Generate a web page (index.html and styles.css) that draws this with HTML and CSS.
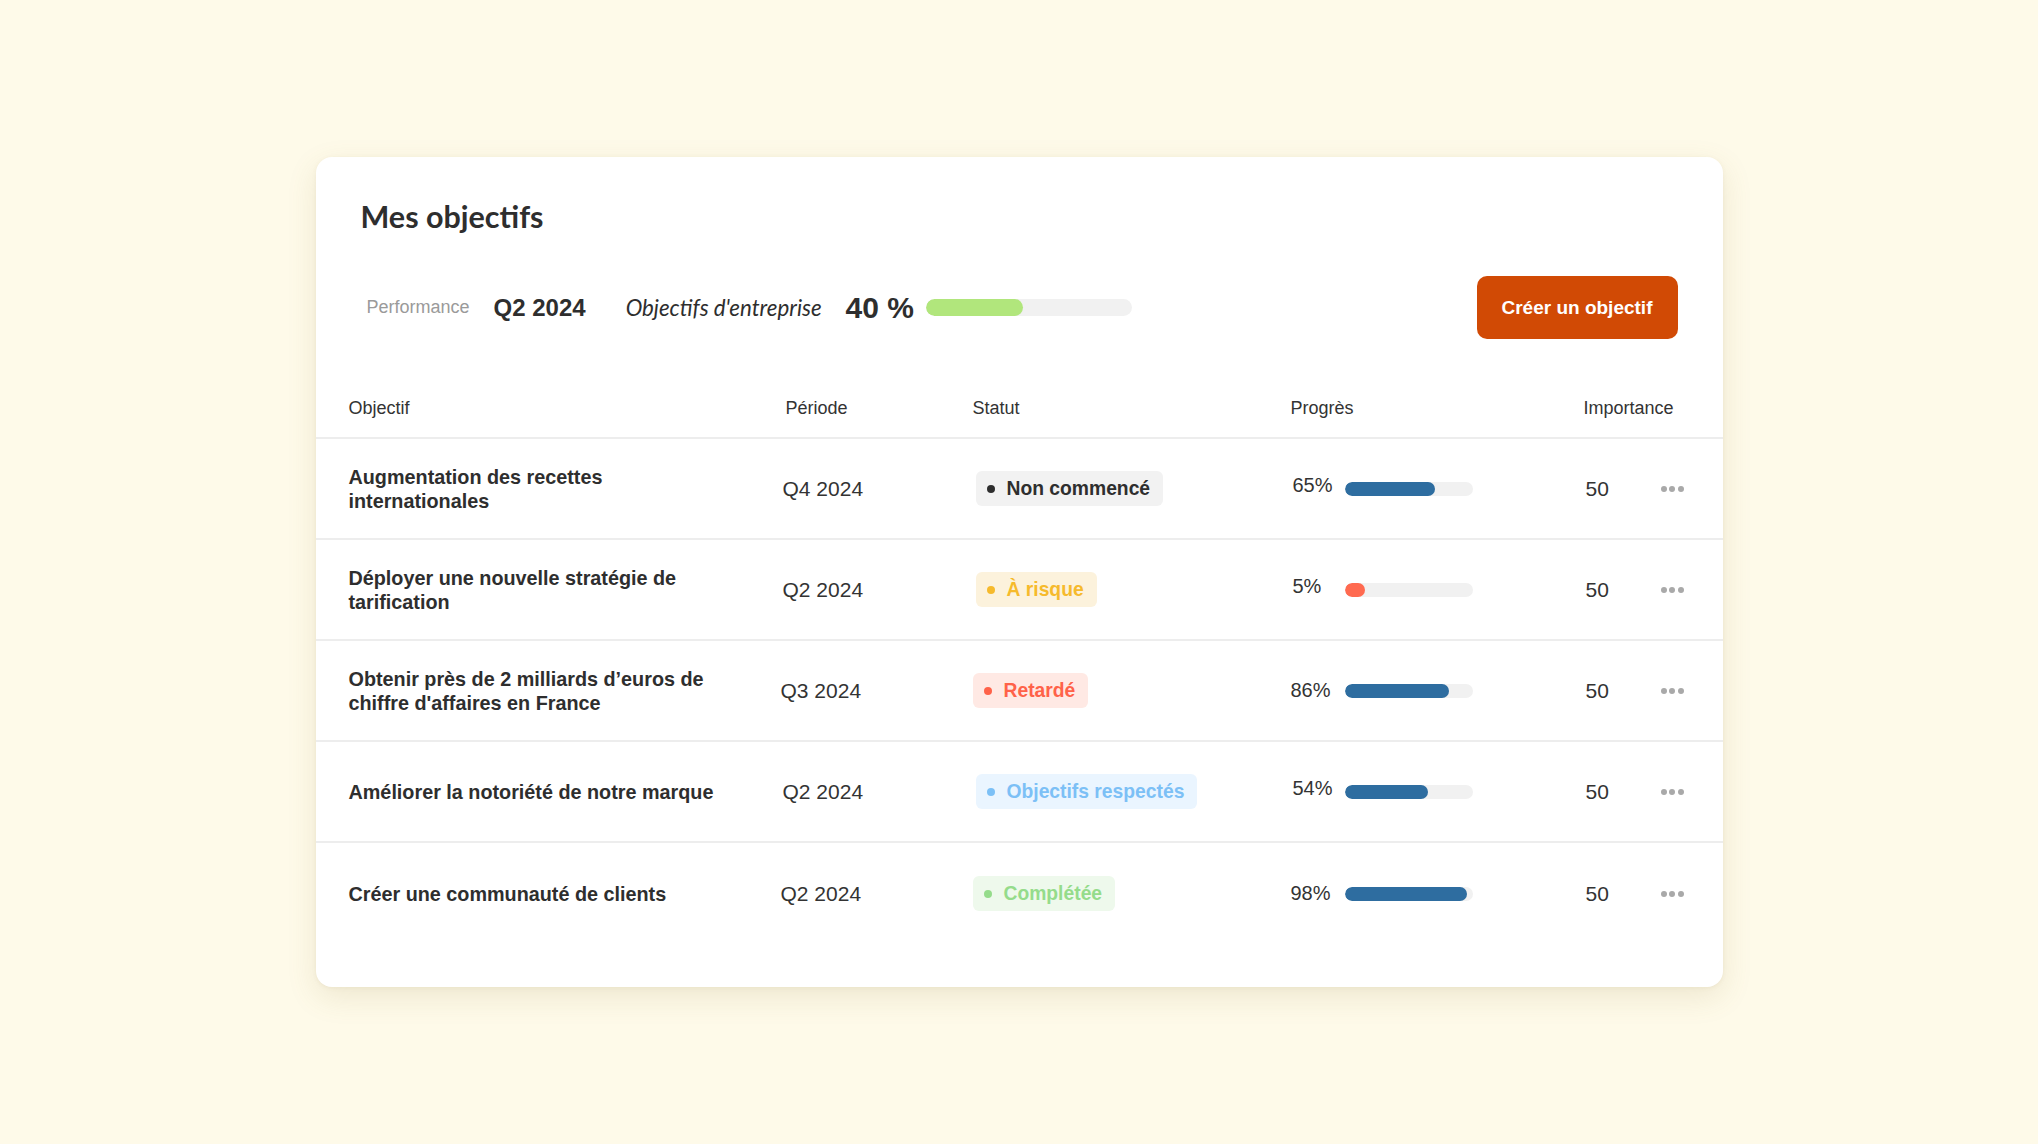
FILE: index.html
```html
<!DOCTYPE html>
<html lang="fr">
<head>
<meta charset="utf-8">
<title>Mes objectifs</title>
<link rel="stylesheet" href="styles.css">
</head>
<body>
<div class="page">
  <div class="card">
    <h1 class="title">Mes objectifs</h1>
    <div class="summary">
      <div class="summary-left">
        <span class="perf-label">Performance</span>
        <span class="perf-quarter">Q2 2024</span>
        <span class="perf-company">Objectifs d'entreprise</span>
        <span class="perf-value">40 %</span>
        <div class="track track-big"><div class="fill fill-green" style="width:47%"></div></div>
      </div>
      <button class="btn">Créer un objectif</button>
    </div>

    <div class="table">
      <div class="grid thead">
        <div class="th">Objectif</div>
        <div class="th">Période</div>
        <div class="th">Statut</div>
        <div class="th">Progrès</div>
        <div class="th">Importance</div>
        <div></div>
      </div>

      <div class="grid trow">
        <div class="obj">Augmentation des recettes internationales</div>
        <div class="period">Q4 2024</div>
        <div class="status"><span class="badge badge-grey"><i class="dot"></i>Non commencé</span></div>
        <div class="progress"><span class="pct pct-up">65%</span><div class="track"><div class="fill fill-blue" style="width:90px"></div></div></div>
        <div class="imp">50</div>
        <div class="more"><i></i><i></i><i></i></div>
      </div>

      <div class="grid trow">
        <div class="obj">Déployer une nouvelle stratégie de tarification</div>
        <div class="period">Q2 2024</div>
        <div class="status"><span class="badge badge-yellow"><i class="dot"></i>À risque</span></div>
        <div class="progress"><span class="pct pct-up">5%</span><div class="track"><div class="fill fill-red" style="width:20px"></div></div></div>
        <div class="imp">50</div>
        <div class="more"><i></i><i></i><i></i></div>
      </div>

      <div class="grid trow">
        <div class="obj">Obtenir près de 2 milliards d’euros de chiffre d'affaires en France</div>
        <div class="period period-left">Q3 2024</div>
        <div class="status status-left"><span class="badge badge-red"><i class="dot"></i>Retardé</span></div>
        <div class="progress"><span class="pct">86%</span><div class="track"><div class="fill fill-blue" style="width:104px"></div></div></div>
        <div class="imp">50</div>
        <div class="more"><i></i><i></i><i></i></div>
      </div>

      <div class="grid trow">
        <div class="obj">Améliorer la notoriété de notre marque</div>
        <div class="period">Q2 2024</div>
        <div class="status"><span class="badge badge-blue"><i class="dot"></i>Objectifs respectés</span></div>
        <div class="progress"><span class="pct pct-up">54%</span><div class="track"><div class="fill fill-blue" style="width:83px"></div></div></div>
        <div class="imp">50</div>
        <div class="more"><i></i><i></i><i></i></div>
      </div>

      <div class="grid trow last">
        <div class="obj">Créer une communauté de clients</div>
        <div class="period period-left">Q2 2024</div>
        <div class="status status-left"><span class="badge badge-green"><i class="dot"></i>Complétée</span></div>
        <div class="progress"><span class="pct">98%</span><div class="track"><div class="fill fill-blue" style="width:122px"></div></div></div>
        <div class="imp">50</div>
        <div class="more"><i></i><i></i><i></i></div>
      </div>
    </div>
  </div>
</div>
</body>
</html>
```

FILE: styles.css
```css
* { box-sizing: border-box; }

html, body {
  margin: 0;
  padding: 0;
}

body {
  background: #fefae9;
  font-family: "Liberation Sans", Arial, sans-serif;
  color: #2e2e2e;
}

.page {
  min-height: 100vh;
  display: flex;
  align-items: center;
  justify-content: center;
}

.card {
  width: 1407px;
  height: 830px;
  background: #ffffff;
  border-radius: 16px;
  box-shadow: 0 10px 30px rgba(140, 120, 60, 0.14), 0 1px 4px rgba(140, 120, 60, 0.08);
}

.title {
  margin: 0;
  padding: 42px 0 0 45px;
  font-family: Lato, "Liberation Sans", sans-serif;
  font-weight: 700;
  font-size: 30.5px;
  line-height: 35px;
  color: #2e2e2e;
}

.summary {
  margin-top: 42px;
  height: 63px;
  padding: 0 45px 0 51px;
  display: flex;
  align-items: center;
  justify-content: space-between;
}

.summary-left {
  display: flex;
  align-items: center;
}

.perf-label {
  font-size: 18px;
  color: #9a9a9a;
  margin-right: 24px;
}

.perf-quarter {
  font-size: 24px;
  font-weight: 700;
  color: #2e2e2e;
  margin-right: 40px;
}

.perf-company {
  font-family: Lato, "Liberation Sans", sans-serif;
  font-style: italic;
  font-size: 22.3px;
  color: #2e2e2e;
  margin-right: 24px;
}

.perf-value {
  font-size: 30px;
  font-weight: 700;
  color: #2e2e2e;
  margin-right: 12px;
}

.track {
  width: 128px;
  height: 14px;
  border-radius: 7px;
  background: #f1f1f1;
  overflow: hidden;
}

.track-big {
  width: 206px;
  height: 17px;
  border-radius: 9px;
}

.fill {
  height: 100%;
  border-radius: 9px;
}

.fill-green { background: #b1e67c; }
.fill-blue { background: #2e6da0; }
.fill-red { background: #ff6a50; }

.btn {
  height: 63px;
  width: 201px;
  border: 0;
  border-radius: 10px;
  background: #d14a05;
  color: #ffffff;
  font-family: "Liberation Sans", Arial, sans-serif;
  font-weight: 700;
  font-size: 19px;
  cursor: pointer;
}

.table {
  margin-top: 40px;
}

.grid {
  display: grid;
  grid-template-columns: 437px 187px 318px 293px 77px 23px;
  align-items: center;
  padding-left: 33px;
}

.thead {
  height: 60px;
  border-bottom: 2px solid #ededed;
}

.th {
  font-size: 18px;
  color: #333333;
}

.trow {
  height: 101px;
  border-bottom: 2px solid #ededed;
}

.trow.last {
  border-bottom: 0;
}

.obj {
  max-width: 385px;
  font-size: 19.8px;
  line-height: 24px;
  font-weight: 700;
  color: #2e2e2e;
}

.period {
  font-size: 21px;
  color: #333333;
  margin-left: -3px;
}

.period-left {
  margin-left: -5px;
}

.status {
  padding-left: 3px;
}

.status-left {
  padding-left: 0;
}

.badge {
  display: inline-flex;
  align-items: center;
  height: 35px;
  padding: 0 13px 0 11px;
  border-radius: 6px;
  font-size: 19.3px;
  font-weight: 700;
}

.badge .dot {
  display: inline-block;
  width: 8px;
  height: 8px;
  border-radius: 50%;
  margin-right: 12px;
  background: currentColor;
}

.badge-grey { background: #f2f2f2; color: #2e2e2e; }
.badge-yellow { background: #fcf2dc; color: #f6ba2c; }
.badge-red { background: #ffe9e4; color: #ff6249; }
.badge-blue { background: #eaf5ff; color: #7cc0f6; }
.badge-green { background: #eef9ec; color: #95dc8b; }

.progress {
  display: flex;
  align-items: center;
}

.pct {
  width: 54px;
  font-size: 20px;
  color: #333333;
}

.pct-up {
  padding-left: 2px;
  margin-top: -6px;
}

.imp {
  font-size: 21px;
  color: #333333;
  padding-left: 2px;
}

.more {
  display: flex;
  justify-content: space-between;
  width: 23px;
}

.more i {
  width: 6px;
  height: 6px;
  border-radius: 50%;
  background: #a9a9a9;
}
```
